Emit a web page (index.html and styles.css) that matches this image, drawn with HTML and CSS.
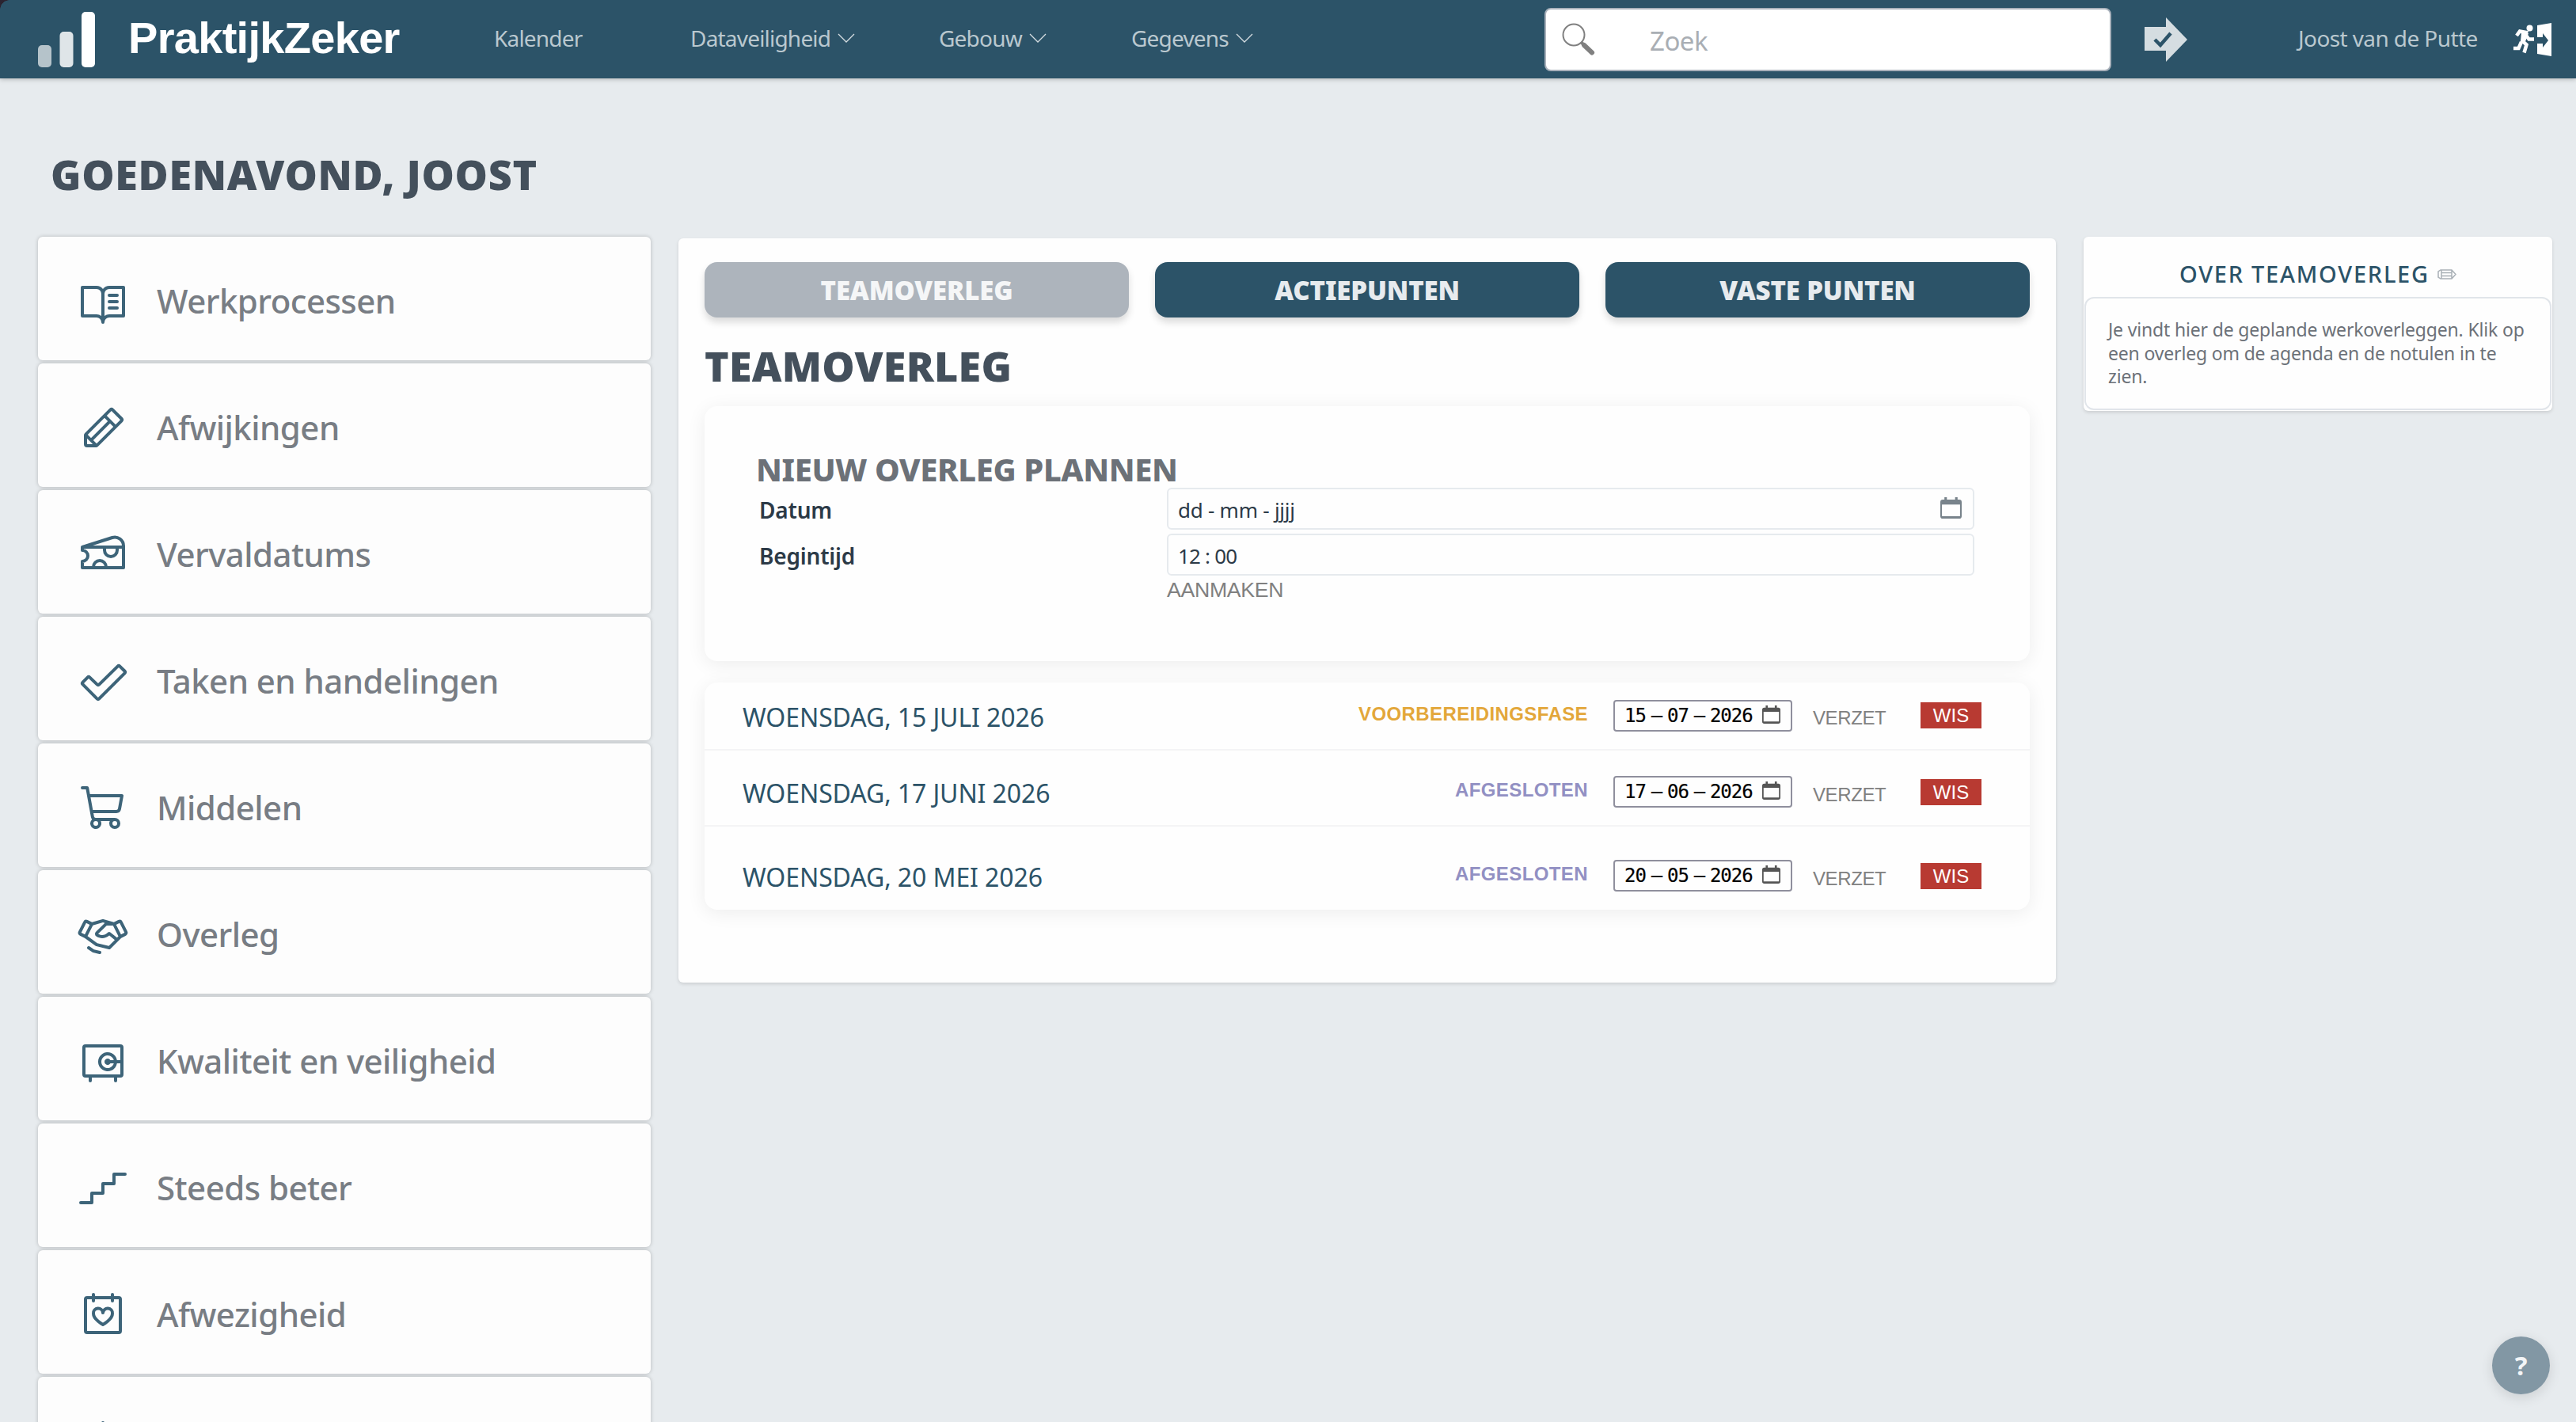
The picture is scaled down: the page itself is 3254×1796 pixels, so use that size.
FILE: index.html
```html
<!DOCTYPE html>
<html lang="nl">
<head>
  <meta charset="UTF-8">
  <title>PraktijkZeker - Teamoverleg</title>
  <link rel="stylesheet" href="styles.css">
</head>
<body>
  <header class="topbar">
    <svg class="logo-bars" width="72" height="70" viewBox="0 0 72 70">
      <rect x="0" y="42" width="17" height="28" rx="5" fill="#fff" opacity=".65"/>
      <rect x="27.500" y="25" width="17" height="45" rx="5" fill="#fff" opacity=".85"/>
      <rect x="55" y="0" width="17" height="70" rx="5" fill="#fff"/>
    </svg>
    <span class="logo-text">PraktijkZeker</span>
    <nav class="nav">
      <a class="nav-kalender">Kalender</a>
      <a class="nav-data">Dataveiligheid<svg class="chevron" viewBox="0 0 22 12"><path d="M1 1l10 10L21 1"/></svg></a>
      <a class="nav-gebouw">Gebouw<svg class="chevron" viewBox="0 0 22 12"><path d="M1 1l10 10L21 1"/></svg></a>
      <a class="nav-gegevens">Gegevens<svg class="chevron" viewBox="0 0 22 12"><path d="M1 1l10 10L21 1"/></svg></a>
    </nav>
    <div class="search">
      <svg width="42" height="42" viewBox="0 0 42 42" fill="none" stroke="#808080">
        <circle cx="15" cy="15" r="13.500" stroke-width="2"/>
        <path d="M24.500 24.500l3 3" stroke-width="4"/>
        <path d="M28 28l10 9.500" stroke-width="6" stroke-linecap="round"/>
      </svg>
      <span>Zoek</span>
    </div>
    <svg class="go" width="54" height="56" viewBox="0 0 54 56">
      <path d="M0 12h27V0l27 28-27 28V42H0z" fill="#d5dde1"/>
      <path d="M13 28l7 7 13-15" fill="none" stroke="#2c5368" stroke-width="4.500"/>
    </svg>
    <span class="user">Joost van de Putte</span>
    <svg class="exit" width="48" height="42" viewBox="0 0 48 42">
      <circle cx="20.500" cy="6.500" r="4" fill="#fff"/>
      <path d="M4 16l4-5.500 8 1.500-4.500 11 5 4.500-3 10" fill="none" stroke="#fff" stroke-width="4.500"/>
      <path d="M14 13l5.500 7.500H26M10 24l-3.500 8H0" fill="none" stroke="#fff" stroke-width="4.500"/>
      <path d="M10 12l9 1-5 13-5-3z" fill="#fff"/>
      <path d="M30 3l18-3v42l-18-3V26h7v5l7-9-7-9v5h-7z" fill="#fff"/>
    </svg>
  </header>

  <h1>GOEDENAVOND, JOOST</h1>

  <main class="columns">
    <aside class="menu">
      <a class="menu-item"><svg class="icon" viewBox="0 0 256 256"><path d="M232,48H160a40,40,0,0,0-32,16A40,40,0,0,0,96,48H24a8,8,0,0,0-8,8V200a8,8,0,0,0,8,8H96a24,24,0,0,1,24,24,8,8,0,0,0,16,0,24,24,0,0,1,24-24h72a8,8,0,0,0,8-8V56A8,8,0,0,0,232,48ZM96,192H32V64H96a24,24,0,0,1,24,24V200A39.810,39.810,0,0,0,96,192Zm128,0H160a39.810,39.810,0,0,0-24,8V88a24,24,0,0,1,24-24h64ZM160,88h40a8,8,0,0,1,0,16H160a8,8,0,0,1,0-16Zm48,40a8,8,0,0,1-8,8H160a8,8,0,0,1,0-16h40A8,8,0,0,1,208,128Zm0,32a8,8,0,0,1-8,8H160a8,8,0,0,1,0-16h40A8,8,0,0,1,208,160Z"/></svg><span>Werkprocessen</span></a>
      <a class="menu-item"><svg class="icon" viewBox="0 0 256 256"><path d="M227.310,73.370,182.630,28.680a16,16,0,0,0-22.630,0L36.690,152A15.860,15.860,0,0,0,32,163.310V208a16,16,0,0,0,16,16H92.690A15.860,15.860,0,0,0,104,219.310L227.310,96a16,16,0,0,0,0-22.630ZM51.310,160,136,75.310,152.690,92,68,176.680ZM48,179.310,76.690,208H48Zm48,25.380L79.310,188,164,103.310,180.690,120Zm96-96L147.310,64l24-24L216,84.680Z"/></svg><span>Afwijkingen</span></a>
      <a class="menu-item"><svg class="icon line" viewBox="0 0 256 256"><path d="M24,88H232V192H24V160a28,28,0,0,0,0-56ZM24,88,175,40A44,44,0,0,1,232,82v6M136,88v16a32,32,0,0,0,64,0V88M80,192v-4a32,32,0,0,1,64,0v4"/></svg><span>Vervaldatums</span></a>
      <a class="menu-item"><svg class="icon" viewBox="0 0 256 256"><path d="M243.280,68.240l-24-23.560a16,16,0,0,0-22.580,0L104,136h0l-.11-.11-36.640-35.270a16,16,0,0,0-22.570.06l-24,24a16,16,0,0,0,0,22.610l71.620,72a16,16,0,0,0,22.630,0L243.330,90.910A16,16,0,0,0,243.280,68.240ZM103.620,208,32,136l24-24,.11.11,36.640,35.270a16,16,0,0,0,22.520,0L208.060,56,232,79.600Z"/></svg><span>Taken en handelingen</span></a>
      <a class="menu-item"><svg class="icon" viewBox="0 0 256 256"><path d="M230.140,58.870A8,8,0,0,0,224,56H62.680L56.600,22.570A8,8,0,0,0,48.730,16H24a8,8,0,0,0,0,16h18L67.560,172.290a24,24,0,0,0,5.330,11.270,28,28,0,1,0,44.400,8.440h45.420A27.750,27.750,0,0,0,160,204a28,28,0,1,0,28-28H91.170a8,8,0,0,1-7.870-6.570L80.130,152h116a24,24,0,0,0,23.610-19.710l12.160-66.860A8,8,0,0,0,230.140,58.870ZM104,204a12,12,0,1,1-12-12A12,12,0,0,1,104,204Zm96,0a12,12,0,1,1-12-12A12,12,0,0,1,200,204Zm4-74.570A8,8,0,0,1,196.100,136H77.220L65.590,72H214.410Z"/></svg><span>Middelen</span></a>
      <a class="menu-item"><svg class="icon" viewBox="0 0 256 256"><path d="M119.760,217.940A8,8,0,0,1,112,224a8.130,8.130,0,0,1-2-.24l-32-8a8,8,0,0,1-2.500-1.110l-24-16a8,8,0,1,1,8.880-13.310l22.840,15.230,30.660,7.670A8,8,0,0,1,119.760,217.940Zm132.690-96.460a15.890,15.890,0,0,1-8,9.250l-23.680,11.840-55.080,55.090a8,8,0,0,1-7.600,2.100l-64-16a8.060,8.060,0,0,1-2.710-1.250L35.860,142.870,11.580,130.730a16,16,0,0,1-7.160-21.460L29.270,59.580h0a16,16,0,0,1,21.460-7.160l22.060,11,53-15.140a8,8,0,0,1,4.400,0l53,15.140,22.060-11a16,16,0,0,1,21.460,7.160l24.850,49.690A15.900,15.900,0,0,1,252.450,121.480Zm-46.180,12.940L179.060,80H147.240L104,122c12.660,8.090,32.510,10.320,50.320-7.630a8,8,0,0,1,10.680-.61l34.410,27.570Zm-187.540-18,17.690,8.850L61.270,75.580,43.580,66.730ZM188,152.660l-27.710-22.190c-19.540,16-44.350,18.110-64.910,5a16,16,0,0,1-2.720-24.820.6.6,0,0,1,.08-.08L137.600,67.060,128,64.320,77.580,78.730,50.210,133.460l49.200,35.150,58.230,14.560Zm49.240-36.240L212.420,66.730l-17.690,8.850,24.850,49.690Z"/></svg><span>Overleg</span></a>
      <a class="menu-item"><svg class="icon" viewBox="0 0 256 256"><path d="M216,40H40A16,16,0,0,0,24,56V192a16,16,0,0,0,16,16H56v16a8,8,0,0,0,16,0V208H184v16a8,8,0,0,0,16,0V208h16a16,16,0,0,0,16-16V56A16,16,0,0,0,216,40Zm0,152H40V56H216v64H199.080a48,48,0,1,0,0,16H216v56Zm-50.160-72a16,16,0,1,0,0,16H183a32,32,0,1,1,0-16Z"/></svg><span>Kwaliteit en veiligheid</span></a>
      <a class="menu-item"><svg class="icon" viewBox="0 0 256 256"><path d="M248,56a8,8,0,0,1-8,8H192v40a8,8,0,0,1-8,8H136v40a8,8,0,0,1-8,8H80v40a8,8,0,0,1-8,8H16a8,8,0,0,1,0-16H64V152a8,8,0,0,1,8-8h48V104a8,8,0,0,1,8-8h48V56a8,8,0,0,1,8-8h56A8,8,0,0,1,248,56Z"/></svg><span>Steeds beter</span></a>
      <a class="menu-item"><svg class="icon line" viewBox="0 0 256 256"><rect x="40" y="40" width="176" height="176" rx="8"/><path d="M80,24V56M176,24V56M128,176S80,150,80,120a24,24,0,0,1,48-4,24,24,0,0,1,48,4C176,150,128,176,128,176Z"/></svg><span>Afwezigheid</span></a>
      <a class="menu-item"><svg class="icon line" viewBox="0 0 256 256"><path d="M128,32V80"/></svg></a>
    </aside>

    <section class="panel">
      <div class="tabs">
        <a class="tab active">TEAMOVERLEG</a>
        <a class="tab">ACTIEPUNTEN</a>
        <a class="tab">VASTE PUNTEN</a>
      </div>
      <h2>TEAMOVERLEG</h2>
      <div class="card form">
        <h3>NIEUW OVERLEG PLANNEN</h3>
        <div class="field">
          <label>Datum</label>
          <div class="input"><span>dd - mm - jjjj</span><svg class="cal" viewBox="0 0 26 26"><path fill-rule="evenodd" d="M5 0h3v3h10V0h3v3h2a3 3 0 0 1 3 3v17a3 3 0 0 1-3 3H3a3 3 0 0 1-3-3V6a3 3 0 0 1 3-3h2zM2 9v14h22V9z"/></svg></div>
        </div>
        <div class="field">
          <label>Begintijd</label>
          <div class="input time"><span>12 : 00</span></div>
        </div>
        <a class="create">AANMAKEN</a>
      </div>
      <div class="card list">
        <div class="row">
          <span class="title">WOENSDAG, 15 JULI 2026</span>
          <span class="status prep">VOORBEREIDINGSFASE</span>
          <div class="date"><span>15</span><span>–</span><span>07</span><span>–</span><span>2026</span><svg class="cal" viewBox="0 0 26 26"><path fill-rule="evenodd" d="M5 0h3v3h10V0h3v3h2a3 3 0 0 1 3 3v17a3 3 0 0 1-3 3H3a3 3 0 0 1-3-3V6a3 3 0 0 1 3-3h2zM2 9v14h22V9z"/></svg></div>
          <a class="move">VERZET</a>
          <a class="delete">WIS</a>
        </div>
        <div class="row">
          <span class="title">WOENSDAG, 17 JUNI 2026</span>
          <span class="status">AFGESLOTEN</span>
          <div class="date"><span>17</span><span>–</span><span>06</span><span>–</span><span>2026</span><svg class="cal" viewBox="0 0 26 26"><path fill-rule="evenodd" d="M5 0h3v3h10V0h3v3h2a3 3 0 0 1 3 3v17a3 3 0 0 1-3 3H3a3 3 0 0 1-3-3V6a3 3 0 0 1 3-3h2zM2 9v14h22V9z"/></svg></div>
          <a class="move">VERZET</a>
          <a class="delete">WIS</a>
        </div>
        <div class="row last">
          <span class="title">WOENSDAG, 20 MEI 2026</span>
          <span class="status">AFGESLOTEN</span>
          <div class="date"><span>20</span><span>–</span><span>05</span><span>–</span><span>2026</span><svg class="cal" viewBox="0 0 26 26"><path fill-rule="evenodd" d="M5 0h3v3h10V0h3v3h2a3 3 0 0 1 3 3v17a3 3 0 0 1-3 3H3a3 3 0 0 1-3-3V6a3 3 0 0 1 3-3h2zM2 9v14h22V9z"/></svg></div>
          <a class="move">VERZET</a>
          <a class="delete">WIS</a>
        </div>
      </div>
    </section>

    <aside class="about">
      <div class="about-title"><span>OVER TEAMOVERLEG</span><svg width="24" height="13" viewBox="0 0 24 13" fill="none" stroke="#a9b0b6" stroke-width="1.500"><path d="M4 1h14l5 5.500-5 5.500H4L1 10V3zM5 1v11M18 1v11M5 4.500h13M5 8.500h13"/></svg></div>
      <div class="about-text">Je vindt hier de geplande werkoverleggen. Klik op een overleg om de agenda en de notulen in te zien.</div>
    </aside>
  </main>

  <div class="help">?</div>
</body>
</html>
```
FILE: styles.css
```css
* {
  box-sizing: border-box;
}

body {
  margin: 0;
  height: 1796px;
  overflow: hidden;
  background: #e7ebee;
  font-family: "Noto Sans", sans-serif;
  color: #2c3a47;
}

h1, h2, h3 {
  margin: 0;
  font-weight: 900;
  line-height: 1;
}

.topbar {
  position: relative;
  display: flex;
  align-items: center;
  height: 99px;
  padding-left: 48px;
  background: #2c5368;
  box-shadow: 0 1px 6px rgba(0, 0, 0, 0.25);
  color: #bac8cf;
  font-size: 28px;
  letter-spacing: -0.8px;
  white-space: nowrap;
}

/* rounded window corner */
.topbar::before {
  content: "";
  position: absolute;
  left: 0;
  top: 0;
  width: 12px;
  height: 12px;
  background: radial-gradient(circle at 100% 100%, transparent 11.5px, #2b2430 12px);
}

.logo-text {
  flex: none;
  width: 462px;
  margin: 0 0 4px 42px;
  font: bold 56px/1 "Liberation Sans", Arial, sans-serif;
  letter-spacing: -0.7px;
  color: #fff;
}

.nav {
  display: flex;
  flex: none;
  width: 1327px;
  padding-bottom: 3px;
}

.nav a {
  display: flex;
  align-items: center;
  flex: none;
}

.nav-kalender { width: 248px; }
.nav-data { width: 314px; }
.nav-gebouw { width: 243px; }

.chevron {
  width: 22px;
  height: 12px;
  margin-left: 9px;
  fill: none;
  stroke: #d5dde1;
  stroke-width: 1.3;
}

.search {
  display: flex;
  align-items: center;
  flex: none;
  width: 716px;
  height: 80px;
  padding-left: 20px;
  border: 2px solid #a9b1bb;
  border-radius: 8px;
  background: #fff;
  font-size: 33px;
  letter-spacing: -0.5px;
  color: #a9aeb4;
}

.search span {
  margin: 3px 0 0 69px;
}

.go {
  margin-left: 42px;
}

.user {
  width: 272px;
  margin-left: 140px;
  padding-bottom: 3px;
  letter-spacing: -0.6px;
}

h1 {
  height: 200px;
  padding: 95px 0 0 64px;
  font-size: 52px;
  letter-spacing: 0.7px;
  color: #44505c;
}

.columns {
  display: flex;
  align-items: flex-start;
  padding-left: 48px;
}

.menu {
  width: 774px;
  display: flex;
  flex-direction: column;
  gap: 4px;
}

.menu-item {
  display: flex;
  align-items: center;
  height: 156px;
  padding-left: 50px;
  border-radius: 6px;
  background: #fdfdfd;
  box-shadow: 0 0 5px rgba(0, 0, 0, 0.22);
  font-size: 42px;
  font-weight: 500;
  letter-spacing: -0.55px;
  color: #787d84;
}

.menu-item span {
  padding-top: 5px;
}

.icon {
  width: 64px;
  height: 64px;
  margin: 8px 36px 0 0;
  fill: #3d6479;
}

.line {
  fill: none;
  stroke: #3d6479;
  stroke-width: 16;
  stroke-linecap: round;
  stroke-linejoin: round;
}

.panel {
  width: 1740px;
  height: 940px;
  margin: 2px 35px 0;
  padding: 30px 33px;
  border-radius: 6px;
  background: #fefefe;
  box-shadow: 0 2px 4px rgba(0, 0, 0, 0.12);
}

.tabs {
  display: flex;
  justify-content: space-between;
}

.tab {
  width: 536px;
  height: 70px;
  border-radius: 16px;
  background: #2c5368;
  box-shadow: 0 6px 10px rgba(0, 0, 0, 0.14);
  font-size: 33px;
  font-weight: 900;
  letter-spacing: -0.15px;
  line-height: 72px;
  text-align: center;
  color: #e7ebee;
}

.tab.active {
  background: #adb4bc;
  color: #f5f6f7;
}

h2 {
  height: 112px;
  padding-top: 35px;
  font-size: 52px;
  letter-spacing: 0.25px;
  color: #44505c;
}

.card {
  border-radius: 16px;
  background: #fefefe;
  box-shadow: 0 4px 24px rgba(0, 0, 0, 0.07);
}

.form {
  height: 322px;
  padding: 60px 70px 0 64px;
}

h3 {
  height: 43px;
  padding-left: 1px;
  font-size: 40px;
  font-weight: 800;
  letter-spacing: -0.4px;
  color: #6c7178;
}

.field {
  display: flex;
  align-items: center;
  height: 53px;
  margin-bottom: 5px;
  font-size: 28px;
}

.field label {
  width: 520px;
  padding: 3px 0 0 5px;
  font-weight: 600;
  letter-spacing: -0.2px;
}

.input {
  display: flex;
  align-items: center;
  justify-content: space-between;
  width: 1020px;
  height: 53px;
  padding: 0 14px 0 12px;
  border: 2px solid #e6eaee;
  border-radius: 6px;
  font-size: 26px;
  letter-spacing: -0.25px;
}

.input span {
  padding-top: 3px;
}

.input.time {
  letter-spacing: -0.8px;
}

.cal {
  width: 27px;
  height: 27px;
  margin-top: -3px;
  fill: #78838b;
}

.create {
  display: block;
  margin: -2px 0 0 520px;
  font: 26.67px/30px "Liberation Sans", Arial, sans-serif;
  letter-spacing: -0.3px;
  color: #808080;
}

.list {
  margin-top: 27px;
  height: 287px;
}

.row {
  display: flex;
  height: 86px;
  padding-left: 48px;
  border-bottom: 2px solid #f4f4f5;
  font: 24px/32px "Liberation Sans", Arial, sans-serif;
  color: #808080;
}

.row + .row {
  height: 96px;
  padding-top: 10px;
}

.row.last {
  border: none;
  padding-top: 20px;
}

.title {
  width: 620px;
  padding-top: 24px;
  font: 32px/40px "Noto Sans", sans-serif;
  letter-spacing: -0.1px;
  color: #2c5368;
}

.status {
  width: 448px;
  padding-top: 24px;
  font-weight: bold;
  letter-spacing: 0.4px;
  text-align: right;
  color: #9290c3;
}

.status.prep {
  color: #e3a73a;
}

.date {
  display: flex;
  align-items: center;
  width: 226px;
  height: 40px;
  margin: 22px 26px 0 32px;
  padding-left: 12px;
  border: 2px solid #8f8f9d;
  border-radius: 4px;
  font: 24px/32px "DejaVu Sans Mono", monospace;
  letter-spacing: -1px;
  -webkit-text-stroke: 0.2px #000;
  color: #000;
}

.date span + span {
  margin-left: 6.8px;
}

.date .cal {
  width: 23px;
  height: 23px;
  margin: -3px 0 0 12px;
  fill: #555;
}

.move {
  width: 136px;
  padding-top: 29px;
  letter-spacing: -0.4px;
}

.delete {
  width: 77px;
  height: 33px;
  margin-top: 25px;
  background: #b83a32;
  color: #fff;
  line-height: 34px;
  text-align: center;
}

.row + .row .move {
  padding-top: 30px;
}

.row + .row .delete {
  margin-top: 26px;
}

.about {
  width: 592px;
  height: 220px;
  padding: 0 1px;
  border-radius: 6px;
  background: #fefefe;
  box-shadow: 0 2px 4px rgba(0, 0, 0, 0.12);
}

.about-title {
  display: flex;
  align-items: center;
  gap: 10px;
  height: 76px;
  padding: 18px 0 0 120px;
  font-size: 29px;
  font-weight: 500;
  letter-spacing: 1.75px;
  line-height: 40px;
  color: #2c5368;
}

.about-text {
  height: 143px;
  padding: 25px 20px 0 28px;
  border: 2px solid #e1e5ea;
  border-radius: 12px;
  font-size: 23px;
  letter-spacing: -0.17px;
  line-height: 29.6px;
  color: #6c7178;
}

.help {
  position: absolute;
  left: 3148px;
  top: 1688px;
  width: 73px;
  height: 73px;
  border-radius: 50%;
  background: #8297a4;
  box-shadow: 0 4px 16px rgba(0, 0, 0, 0.12);
  font-size: 33px;
  font-weight: 700;
  line-height: 73px;
  text-align: center;
  color: #f3f5f7;
}
```
